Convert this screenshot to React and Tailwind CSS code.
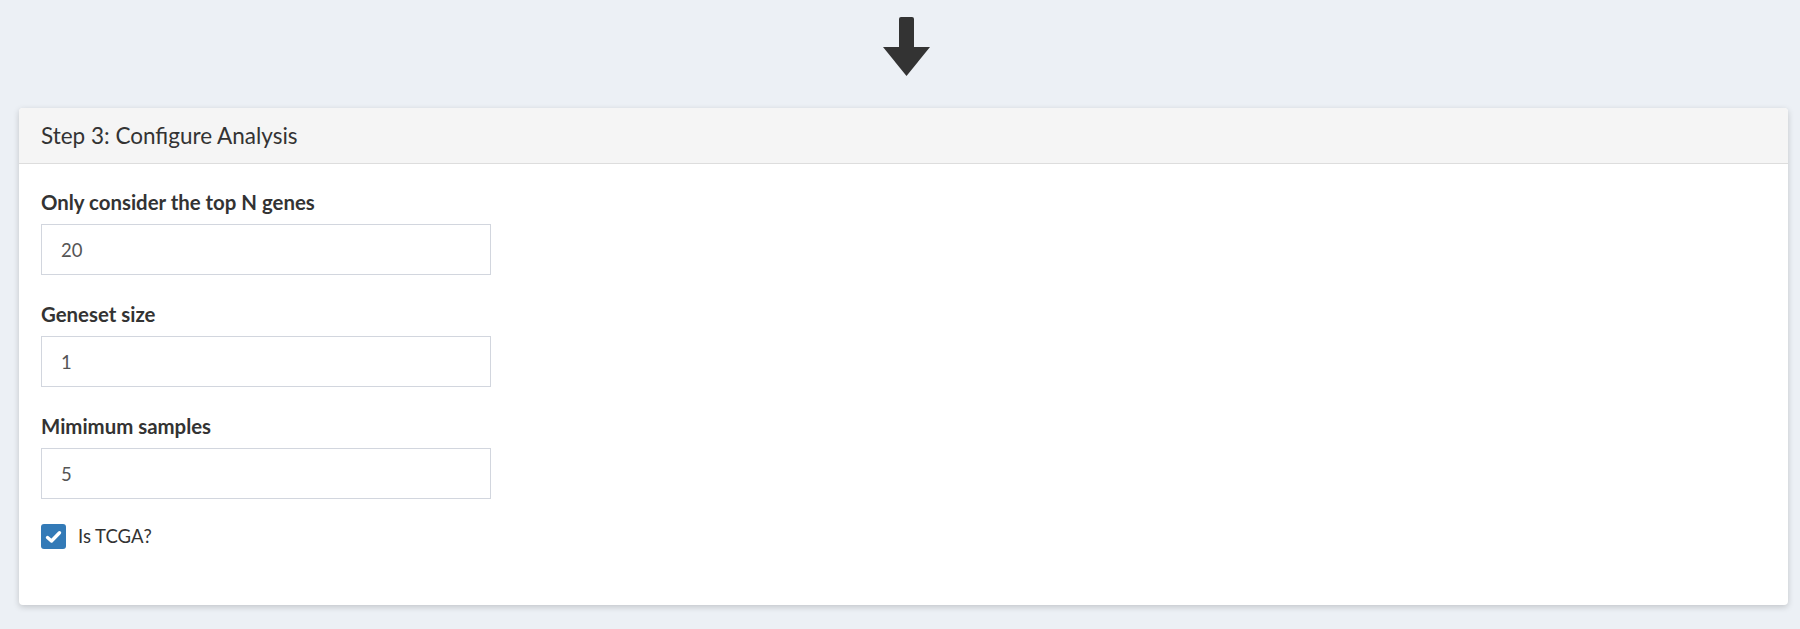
import React from "react";

const fields = [
  { label: "Only consider the top N genes", value: "20" },
  { label: "Geneset size", value: "1" },
  { label: "Mimimum samples", value: "5" },
];

export default function App() {
  return (
    <div
      className="min-h-[629px] bg-[#ecf0f5] pl-[19px] pr-[12px] pt-[17px] text-[#333]"
      style={{ fontFamily: "Lato, 'Open Sans', sans-serif" }}
    >
      {/* down arrow between steps */}
      <div className="flex justify-center pl-[5px]">
        <svg width="47" height="59" viewBox="0 0 47 59">
          <rect x="16" y="0" width="15" height="32" rx="2" fill="#333" />
          <polygon points="0,30 47,30 23.5,59" fill="#333" />
        </svg>
      </div>

      <div className="mt-[32px] rounded-[4px] bg-white shadow-[0_2px_6px_rgba(0,0,0,0.18)]">
        <div className="flex h-[56px] items-center rounded-t-[4px] border-b border-[#ddd] bg-[#f5f5f5] px-[22px] text-[22.5px]">
          Step 3: Configure Analysis
        </div>

        <div className="px-[22px] pb-[56px] pt-[27px]">
          {fields.map((f, i) => (
            <div key={i} className={i > 0 ? "mt-[28px]" : ""}>
              <label className="block text-[20.4px] font-bold leading-[22px]">{f.label}</label>
              <input
                readOnly
                value={f.value}
                className="mt-[11px] block h-[51px] w-[450px] border border-[#d2d6de] bg-white px-[19px] text-[18.5px] text-[#555] outline-none"
              />
            </div>
          ))}

          <label className="mt-[25px] flex items-center gap-[12px]">
            <span className="flex h-[25px] w-[25px] items-center justify-center rounded-[3px] bg-[#337ab7]">
              <svg width="17" height="14" viewBox="0 0 17 14">
                <path d="M2.5 7.5 L6.5 11 L14.5 2.8" fill="none" stroke="#fff" strokeWidth="3.4" strokeLinecap="round" strokeLinejoin="round" />
              </svg>
            </span>
            <span className="text-[18.5px] leading-[25px]">Is TCGA?</span>
          </label>
        </div>
      </div>
    </div>
  );
}
